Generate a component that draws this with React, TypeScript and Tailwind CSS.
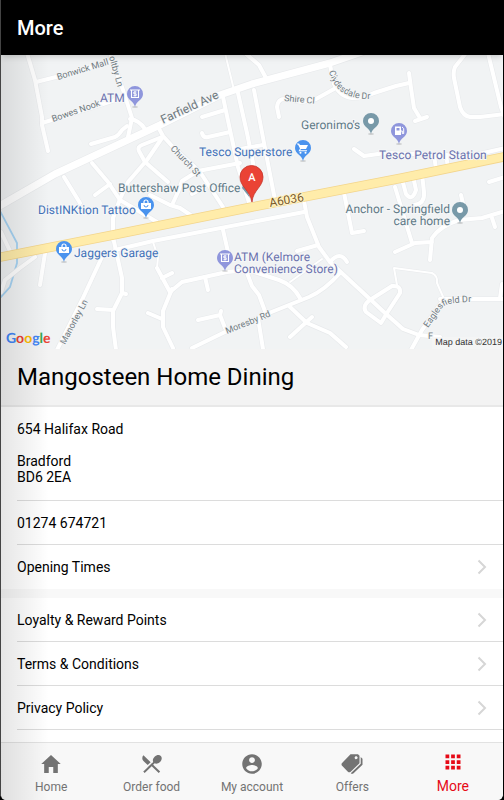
import React from 'react';
import { IoMdApps, IoMdContact, IoMdHome, IoMdPricetags, IoMdRestaurant } from 'react-icons/io';

type PinKind = 'atm' | 'shop' | 'cart' | 'fuel' | 'place';

const minorRoads = [
  'M27 53 L35 80 L42 117 V125 L48 151',
  'M36 82 L56 77 L110 62',
  'M42 123 L100 105 L124 97',
  'M110 53 L123 90 L132 118 L128 137',
  'M130 119 Q139 120 145 129',
  'M91 144 L115 137 Q119 135 122 130 L127 126',
  'M157 125 L163 136 L172 146 L200 172 L223 207',
  'M162 137 L142 145 Q137 147 139 151 L145 162 L168 182',
  'M162 138 L147 160 L128 182 L120 199 L113 218 V240',
  'M92 163 L108 182 L120 200 L157 222',
  'M95 195 L110 184',
  'M64 177 L80 203',
  'M150 195 L170 205 L180 208 L192 216',
  'M172 205 L178 192 L182 181 L198 171 L240 163',
  'M192 194 L203 188',
  'M223 97 L230 130 L238 167 L250 206',
  'M238 93 L247 133 L254 168',
  'M202 117 L225 110',
  'M202 133 Q203 138 208 137 L230 132',
  'M245 53 L259 65 L266 78',
  'M254 90 L264 143 L275 200',
  'M240 149 L263 145',
  'M330 65 L334 84 Q340 97 352 98 Q364 98 374 93 L396 86 L409 83',
  'M279 117 L277 107 Q278 98 286 99 L302 102 L316 99 L334 89',
  'M409 73 L411 88 L414 108 L420 118 M415 121 L427 117',
  'M466 53 L455 67 Q453 72 454 78 L460 107 Q463 116 470 117 H480 L505 114',
  'M488 53 L501 107 L505 118',
  'M354 149 L364 156 L385 153 L470 156 L505 148',
  'M434 155 L436 169 M446 155 L448 167',
  'M115 250 L153 241 L304 212',
  'M304 201 L307 217 L319 247 L330 262 L385 313 L403 329 L419 335 L440 337',
  'M330 262 Q340 250 347 262',
  'M297 251 L318 245',
  'M192 348 L225 332 L269 313 L309 297 Q325 290 340 273',
  'M157 268 L170 292 L182 282 L227 272 L248 270 L279 280 Q293 285 300 298',
  'M247 273 L252 286 L259 295 L266 314',
  'M290 307 L307 323 L330 333 L346 347 M312 317 L290 337',
  'M258 318 L263 349',
  'M373 298 L392 286 Q401 285 400 293 L387 313 L381 323 L366 312 Q361 305 373 298',
  'M344 193 L352 233 L364 231',
  'M395 187 L412 243 M395 252 L415 243 L432 242 M430 260 L432 238 Q440 226 459 220 L482 218 L505 211',
  'M492 218 L495 227 M461 195 L464 208',
  'M402 179 L406 194 Q412 202 416 190 L413 176 M422 174 L424 192 Q425 204 414 205',
  'M489 182 L505 177',
  'M113 237 L122 278 V293 L113 311 V327 L116 350',
  'M97 309 L113 310 M122 293 L126 294',
  'M102 257 L82 300 L57 350',
  'M45 253 L40 285',
  'M35 257 L20 268 L5 280 L1 292',
  'M1 232 L11 253',
  'M162 278 L172 273 M172 289 L163 311 V327 L173 348 M148 313 L162 319',
  'M223 230 L228 252',
  'M205 277 L208 290',
  'M198 320 L220 315 L225 328 M220 315 L221 311',
  'M440 299 L505 299 M444 299 L422 330 L411 350 M500 298 L502 284',
];

const lanes = [
  'M225 53 L234 90',
  'M153 242 L158 257 L157 268',
  'M290 282 L322 259',
  'M397 285 L394 268 L432 273 Q438 276 437 283 L444 299',
];

const pinColors: Record<PinKind, string> = {
  atm: '#8f96dc',
  fuel: '#8f96dc',
  shop: '#4a93ee',
  cart: '#4a93ee',
  place: '#7899a8',
};

// x/y is the tip of the pin
const pins: { kind: PinKind; x: number; y: number }[] = [
  { kind: 'atm', x: 135, y: 107 },
  { kind: 'atm', x: 225, y: 271 },
  { kind: 'shop', x: 146, y: 218 },
  { kind: 'shop', x: 64, y: 262 },
  { kind: 'cart', x: 303, y: 161 },
  { kind: 'fuel', x: 399, y: 144 },
  { kind: 'place', x: 371, y: 134 },
  { kind: 'place', x: 460, y: 223 },
];

const Pin: React.FC<{ kind: PinKind; x: number; y: number }> = ({ kind, x, y }) => (
  <g transform={`translate(${x} ${y})`}>
    <ellipse cx="0" cy="0" rx="3" ry="1" fill="#000" opacity="0.15" />
    <path d="M0 0 C-1-6-8-7-8-13 A8 8 0 1 1 8-13 C8-7 1-6 0 0Z" fill={pinColors[kind]} />
    {kind === 'place' && <circle cx="0" cy="-13" r="3" fill="#fff" />}
    {kind === 'atm' && (
      <g fill="none" stroke="#fff" strokeWidth="1.1">
        <path d="M-5-17 H5 M-3.5-17 V-9.5 H3.5 V-17" />
        <path d="M1.5-15 H-1.2 V-13.2 H1.2 V-11.3 H-1.5 M0-16 V-10.5" strokeWidth="0.9" />
      </g>
    )}
    {kind === 'shop' && (
      <g>
        <path d="M-5-15 H5 V-9 H-5Z" fill="#fff" />
        <path d="M-2-15 V-16 A2 2 0 0 1 2-16 V-15" fill="none" stroke="#fff" strokeWidth="1.2" />
        <path d="M-2-13 A2 2 0 0 0 2-13" fill="none" stroke="#4a93ee" />
      </g>
    )}
    {kind === 'cart' && (
      <g fill="#fff">
        <path d="M-6-17.5 H-4 L-3-16 H5 L3-12 H-2 L-3-10.7 H4 V-9.7 H-4.5 L-3-12.5 L-5-16.5 H-6Z" />
        <circle cx="-2.5" cy="-8.3" r="1" />
        <circle cx="2.5" cy="-8.3" r="1" />
      </g>
    )}
    {kind === 'fuel' && (
      <g>
        <path d="M-4-17.5 H2 V-9 H-4Z" fill="#fff" />
        <path d="M-2.5-16 H.5 V-13.5 H-2.5Z" fill="#8f96dc" />
        <path d="M2-13 H3.3 V-10.5 H4.7 V-15.5 L3-17" fill="none" stroke="#fff" />
      </g>
    )}
  </g>
);

const StoreMap: React.FC = () => (
  <svg
    viewBox="1 55 502 294"
    preserveAspectRatio="xMidYMid slice"
    className="block h-[294px] w-full bg-[#f1f3f4] font-[Roboto,sans-serif]"
    textRendering="geometricPrecision"
    role="img"
    aria-label="Store location"
  >
    <path d="M0 211 L17 243 V263 L10 287 L0 298" fill="none" stroke="#a6d3f3" strokeWidth="1.8" />
    <g fill="none" strokeLinecap="round" strokeLinejoin="round">
      <g stroke="#e8eaec">
        {minorRoads.map((d) => (
          <path key={d} d={d} strokeWidth="5.2" />
        ))}
        {lanes.map((d) => (
          <path key={d} d={d} strokeWidth="3" />
        ))}
        <path d="M-4 208 L55 174 L160 125 L220 95 L252 84 L330 63 L362 52" strokeWidth="8.5" />
      </g>
      <g stroke="#fff">
        {minorRoads.map((d) => (
          <path key={d} d={d} strokeWidth="4" />
        ))}
        {lanes.map((d) => (
          <path key={d} d={d} strokeWidth="2" />
        ))}
        <path d="M-4 208 L55 174 L160 125 L220 95 L252 84 L330 63 L362 52" strokeWidth="7" />
      </g>
      <path d="M-4 258 L113 235 L252 207 L402 178 L508 156" stroke="#f3d58c" strokeWidth="9.5" />
      <path d="M-4 258 L113 235 L252 207 L402 178 L508 156" stroke="#ffecaa" strokeWidth="8" />
    </g>

    <g fontSize="9" fill="#6f7a80" stroke="#f4f5f6" strokeWidth="2" paintOrder="stroke">
      <text transform="translate(58 80) rotate(-17)">Bonwick Mall</text>
      <text transform="translate(53 122) rotate(-19)">Bowes Nook</text>
      <text transform="translate(109 57) rotate(74)">oltby Ln</text>
      <text transform="translate(170 149) rotate(46)">Church St</text>
      <text transform="translate(65 345) rotate(-62)">Manorley Ln</text>
      <text transform="translate(227 334) rotate(-22)">Moresby Rd</text>
      <text transform="translate(284 101) rotate(5)">Shire Cl</text>
      <path id="clydesdale" d="M329 71 Q335 100 372 99" fill="none" stroke="none" />
      <text>
        <textPath href="#clydesdale">Clydesdale Dr</textPath>
      </text>
      <path id="eaglesfield" d="M428 328 L439 312 C444 304 447 302 480 302" fill="none" stroke="none" />
      <text>
        <textPath href="#eaglesfield">Eaglesfield Dr</textPath>
      </text>
      <text x="428" y="339">F</text>
      <text transform="translate(163 124) rotate(-25)" fontSize="12">
        Farfield Ave
      </text>
    </g>
    <text
      transform="translate(270 207) rotate(-10)"
      fontSize="12"
      fill="#7a5a2b"
      stroke="#fff3c8"
      strokeWidth="2"
      paintOrder="stroke"
    >
      A6036
    </text>

    <g fontSize="12" stroke="#f6f7f8" strokeWidth="2" paintOrder="stroke">
      <g fill="#6a72ae">
        <text x="100" y="102">ATM</text>
        <text x="379" y="159">Tesco Petrol Station</text>
        <text x="234" y="261">ATM (Kelmore</text>
        <text x="234" y="273">Convenience Store)</text>
      </g>
      <g fill="#4272b8">
        <text x="199" y="156">Tesco Superstore</text>
        <text x="38" y="214">DistINKtion Tattoo</text>
        <text x="74" y="257">Jaggers Garage</text>
      </g>
      <g fill="#5f7a87">
        <text x="301" y="129">Geronimo's</text>
        <text x="118" y="192">Buttershaw Post Office</text>
        <text x="450" y="213" textAnchor="end">Anchor - Springfield</text>
        <text x="450" y="225" textAnchor="end">care home</text>
      </g>
    </g>

    {pins.map((pin) => (
      <Pin key={`${pin.x}-${pin.y}`} {...pin} />
    ))}

    <path d="M244 181 L242 188 L250 198Z" fill="#7899a8" />
    <path
      d="M252 202 C250 190 240 187 240 177 A11.5 11.5 0 0 1 263 177 C263 187 253 190 252 202Z"
      fill="#ea4335"
      stroke="#c5352b"
      strokeWidth="0.8"
    />
    <text x="252" y="181" fontSize="11" fontWeight="500" textAnchor="middle" fill="#fff">
      A
    </text>

    <text x="6" y="343" fontSize="14" fontWeight="700" className="font-[Lato,sans-serif]">
      <tspan fill="#4285f4">G</tspan>
      <tspan fill="#ea4335">o</tspan>
      <tspan fill="#fbbc05">o</tspan>
      <tspan fill="#4285f4">g</tspan>
      <tspan fill="#34a853">l</tspan>
      <tspan fill="#ea4335">e</tspan>
    </text>
    <rect x="432" y="337" width="71" height="12" fill="#f5f5f5" opacity="0.8" />
    <text x="502" y="345" fontSize="9" textAnchor="end" fill="#333" className="font-['Liberation_Sans',sans-serif]">
      Map data ©2019
    </text>
  </svg>
);

const LinkRow: React.FC<{ label: string }> = ({ label }) => (
  <a href="#" className="flex h-11 items-center justify-between border-b border-[#dcdcdc] pr-4 last:border-b-0">
    {label}
    <svg viewBox="0 0 10 16" className="h-4 w-[10px]" fill="none" stroke="#d6d6d6" strokeWidth="2">
      <path d="M1.5 1.5 L8 8 L1.5 14.5" />
    </svg>
  </a>
);

const tabs = [
  { label: 'Home', Icon: IoMdHome },
  { label: 'Order food', Icon: IoMdRestaurant },
  { label: 'My account', Icon: IoMdContact },
  { label: 'Offers', Icon: IoMdPricetags },
];

const App: React.FC = () => {
  return (
    <div className="h-screen bg-black font-[Roboto,sans-serif]">
      <div className="relative flex h-full flex-col overflow-hidden rounded-b-md border-x border-r-black border-l-[#444] bg-white">
        <header className="z-10 flex h-[55px] shrink-0 items-center bg-black px-4 shadow-md">
          <h1 className="text-xl font-medium text-white">More</h1>
        </header>

        <main className="min-h-0 flex-1 overflow-hidden text-sm text-black">
          <StoreMap />
          <h2 className="border-b-2 border-[#e8e8e8] bg-[#f3f3f3] px-4 py-3 text-2xl">
            Mangosteen Home Dining
          </h2>
          <section className="pl-4">
            <address className="border-b border-[#dcdcdc] pt-[14px] pb-[15px] leading-4 not-italic">
              654 Halifax Road
              <br />
              <br />
              Bradford
              <br />
              BD6 2EA
            </address>
            <a href="tel:01274674721" className="flex h-11 items-center border-b border-[#dcdcdc]">
              01274 674721
            </a>
            <LinkRow label="Opening Times" />
          </section>
          <div className="h-[9px] bg-[#f8f8f8]" />
          <section className="pl-4">
            <LinkRow label="Loyalty & Reward Points" />
            <LinkRow label="Terms & Conditions" />
            <LinkRow label="Privacy Policy" />
            <div className="h-11" />
          </section>
        </main>

        <nav className="grid h-[58px] shrink-0 grid-cols-5 border-t border-[#e2e2e2] bg-[#f8f8f8] text-xs text-[#737373]">
          {tabs.map(({ label, Icon }) => (
            <a key={label} href="#" className="flex flex-col items-center gap-[3px] pt-[9px]">
              <Icon className="h-6 w-6" />
              {label}
            </a>
          ))}
          <a href="#" className="flex flex-col items-center gap-[2px] pt-[7px] text-sm text-[#e60a17]">
            <IoMdApps className="h-6 w-6" />
            More
          </a>
        </nav>

        <div className="pointer-events-none absolute inset-y-0 left-0 w-12 bg-linear-to-r from-black/10 to-transparent" />
      </div>
    </div>
  );
};

export default App;
